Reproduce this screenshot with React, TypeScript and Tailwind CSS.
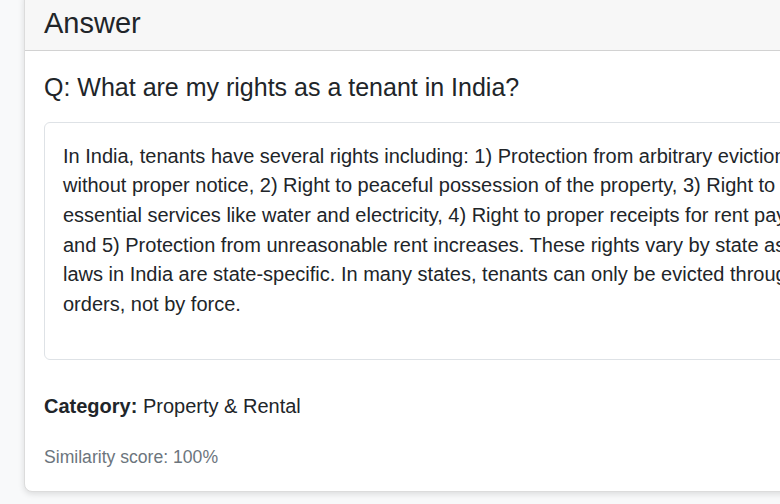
const lines = [
  "In India, tenants have several rights including: 1) Protection from arbitrary eviction",
  "without proper notice, 2) Right to peaceful possession of the property, 3) Right to",
  "essential services like water and electricity, 4) Right to proper receipts for rent payments,",
  "and 5) Protection from unreasonable rent increases. These rights vary by state as rental",
  "laws in India are state-specific. In many states, tenants can only be evicted through court",
  "orders, not by force.",
];

export default function App() {
  return (
    <div
      className="h-[504px] w-[780px] overflow-hidden bg-[#f8f9fa] pl-[24px] text-[#212529]"
      style={{ fontFamily: '"Liberation Sans", Arial, sans-serif' }}
    >
      <div className="-mt-[9px] w-[900px] shrink-0 overflow-hidden rounded-[8px] border border-[#dcdcdc] bg-white shadow-[0_2px_6px_rgba(0,0,0,0.12)]">
        <div className="border-b border-[#d2d2d2] bg-[#f7f7f7] px-[19px] pt-[14px] pb-[9px]">
          <h4 className="text-[29px] leading-[1.2] font-normal">Answer</h4>
        </div>
        <div className="px-[19px] pt-[21px] pb-[20px]">
          <h5 className="text-[25px] leading-[30px] font-normal">
            Q: What are my rights as a tenant in India?
          </h5>
          <div className="mt-[20px] rounded-[6px] border border-[#dee2e6] px-[18px] pt-[19px] pb-[40px]">
            <p className="whitespace-nowrap text-[20px] leading-[29.6px]">
              {lines.map((line, i) => (
                <span key={i} className="block">
                  {line}
                </span>
              ))}
            </p>
          </div>
          <p className="mt-[31px] text-[20px] leading-[30px]">
            <strong className="font-bold">Category:</strong> Property &amp; Rental
          </p>
          <p className="mt-[23px] text-[17.6px] leading-[26.4px] text-[#6c757d]">
            Similarity score: 100%
          </p>
        </div>
      </div>
    </div>
  );
}
